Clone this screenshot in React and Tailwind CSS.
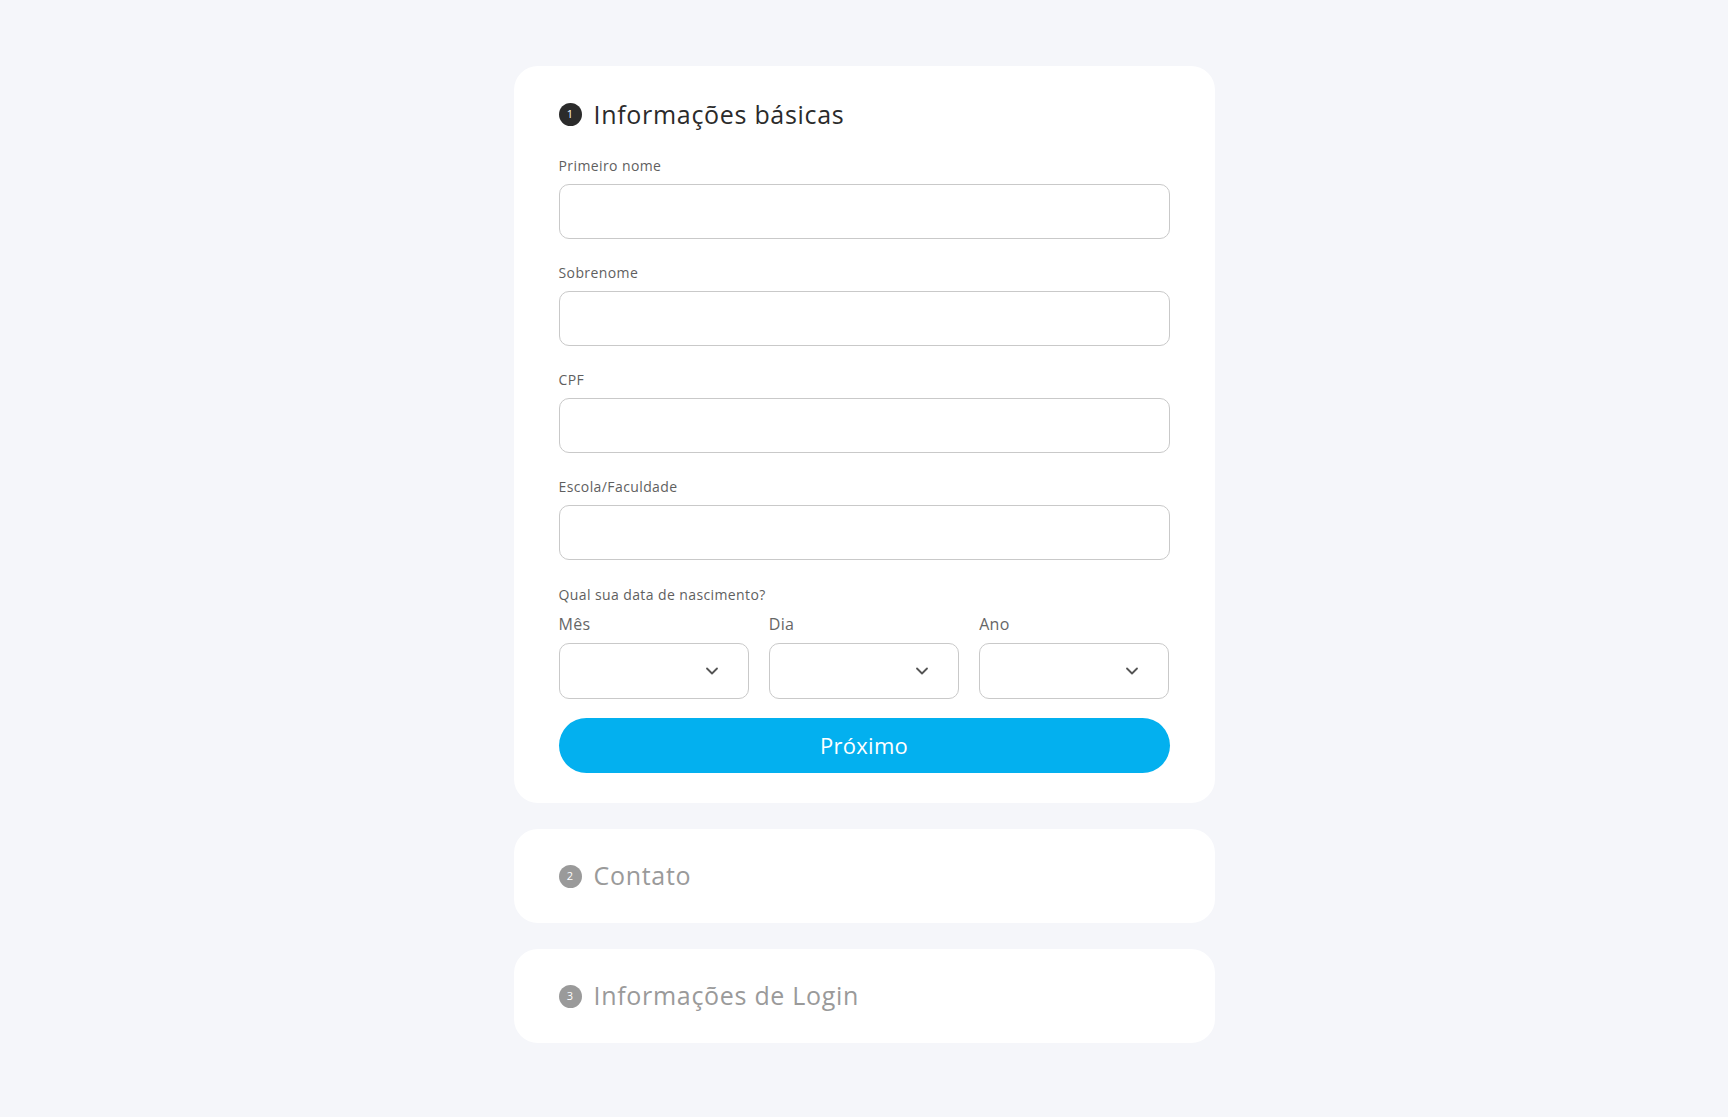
import { ChevronDown } from "lucide-react";

const font = { fontFamily: '"Open Sans", "Noto Sans", sans-serif' };

const Step = ({ n, active }) => (
  <span
    className={`flex h-[23px] w-[23px] shrink-0 items-center justify-center rounded-full text-[11px] text-white ${
      active ? "bg-[#2b2b2b]" : "bg-[#9a9a9a]"
    }`}
  >
    {n}
  </span>
);

const Field = ({ label }) => (
  <div className="flex flex-col">
    <label className="text-[14px] leading-[20px] tracking-[0.4px] text-[#5f5f5f]">{label}</label>
    <input className="mt-[8px] h-[55px] w-full rounded-[10px] border border-[#c9c9c9] bg-white px-4 outline-none" />
  </div>
);

const SelectBox = ({ label }) => (
  <div className="flex flex-col">
    <span className="text-[16px] leading-[24px] tracking-[0.3px] text-[#666]">{label}</span>
    <div className="mt-[7px] flex h-[56px] items-center justify-end rounded-[10px] border border-[#c9c9c9] bg-white pr-[26px]">
      <ChevronDown size={20} strokeWidth={2.2} className="text-[#555]" />
    </div>
  </div>
);

const Collapsed = ({ n, title }) => (
  <div className="flex h-[94px] items-center gap-[12px] rounded-[24px] bg-white px-[45px]">
    <Step n={n} />
    <span className="text-[25px] tracking-[0.7px] text-[#9a9a9a]">{title}</span>
  </div>
);

export default function App() {
  return (
    <div className="min-h-screen w-full bg-[#f5f6fa] pt-[66px]" style={font}>
      <div className="mx-auto flex w-[701px] flex-col gap-[26px]">
        <div className="rounded-[24px] bg-white px-[45px] pb-[30px] pt-[28px]">
          <div className="flex items-center gap-[12px]">
            <Step n={1} active />
            <h1 className="text-[25px] leading-[40px] tracking-[0.7px] text-[#2b2b2b]">Informações básicas</h1>
          </div>
          <div className="mt-[22px] flex flex-col gap-[24px]">
            <Field label="Primeiro nome" />
            <Field label="Sobrenome" />
            <Field label="CPF" />
            <Field label="Escola/Faculdade" />
          </div>
          <p className="mt-[25px] text-[14px] leading-[20px] tracking-[0.4px] text-[#5f5f5f]">
            Qual sua data de nascimento?
          </p>
          <div className="mt-[7px] grid grid-cols-3 gap-[20px]">
            <SelectBox label="Mês" />
            <SelectBox label="Dia" />
            <SelectBox label="Ano" />
          </div>
          <button className="mt-[19px] h-[55px] w-full rounded-full bg-[#03b0ef] text-[22px] tracking-[0.3px] text-white">
            Próximo
          </button>
        </div>
        <Collapsed n={2} title="Contato" />
        <Collapsed n={3} title="Informações de Login" />
      </div>
    </div>
  );
}
